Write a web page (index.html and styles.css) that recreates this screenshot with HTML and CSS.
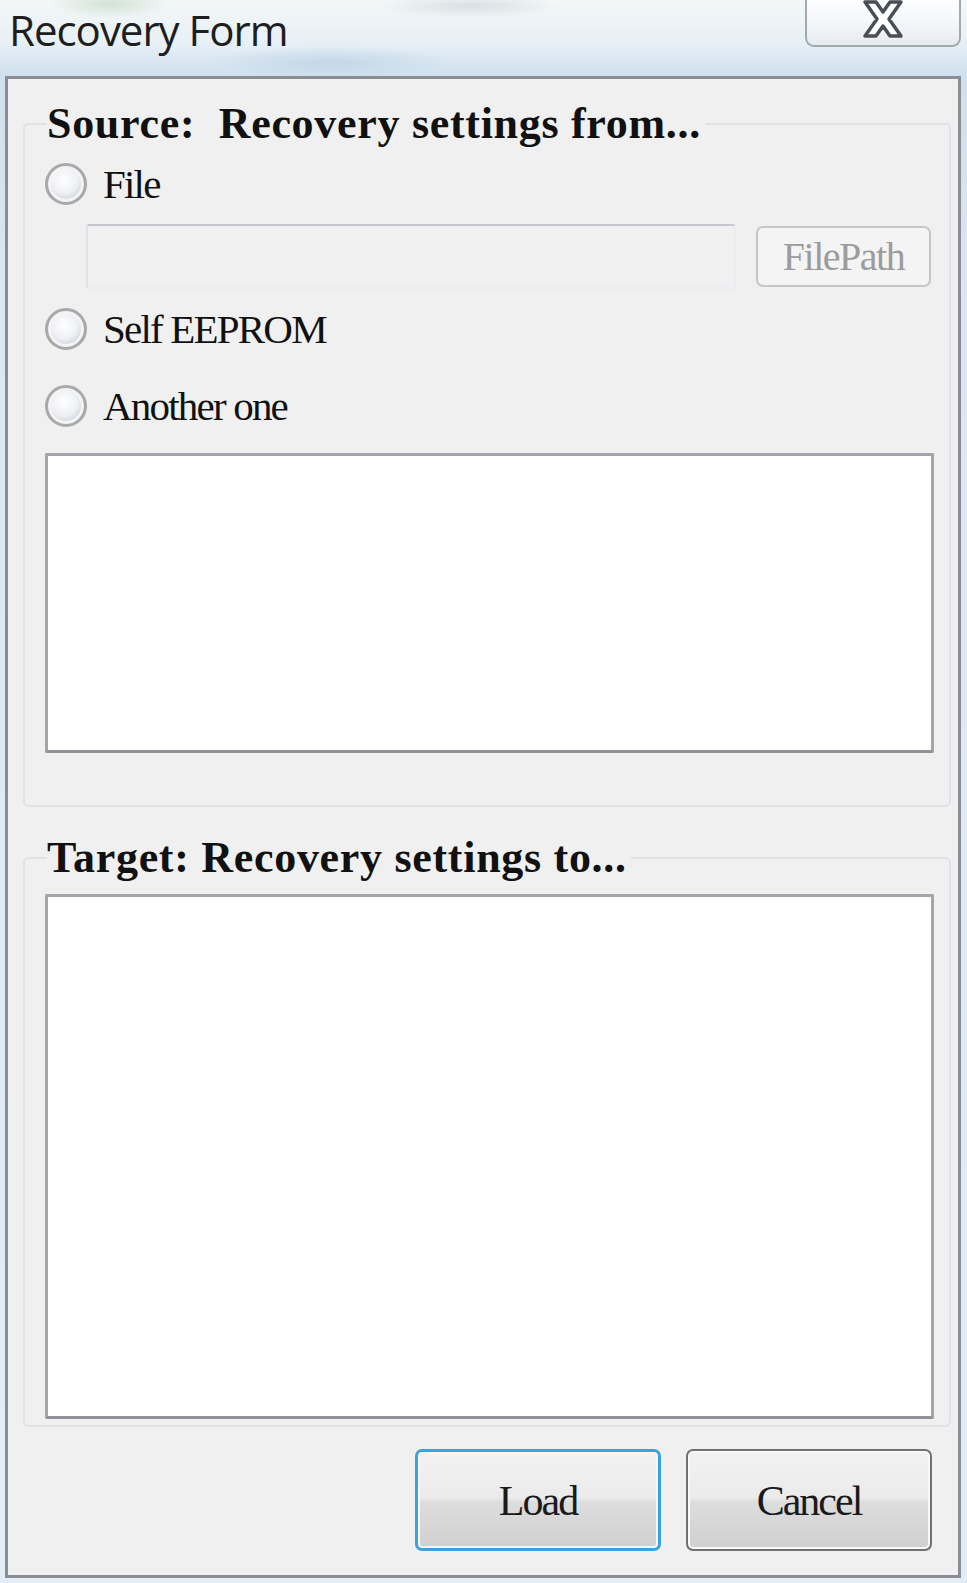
FILE: index.html
```html
<!DOCTYPE html>
<html lang="en">
<head>
  <meta charset="UTF-8">
  <meta name="viewport" content="width=device-width, initial-scale=1.0">
  <title>Recovery Form</title>
  <link rel="stylesheet" href="styles.css">
</head>
<body>
  <div class="titlebar">
    <div class="title">Recovery Form</div>
    <div class="close-btn">
      <svg width="48" height="40" viewBox="0 0 48 40">
        <path d="M6 3 L17 3 L24 13 L31 3 L42 3 L30 20 L42 37 L31 37 L24 27 L17 37 L6 37 L18 20 Z"
              fill="#fff" stroke="#4a4f57" stroke-width="3.5" stroke-linejoin="round"/>
      </svg>
    </div>
  </div>

  <div id="window">
    <fieldset class="group" id="source">
      <legend>Source:&nbsp; Recovery settings from...</legend>

      <label class="radio-row" id="rowFile">
        <span class="radio"></span>
        <span class="label">File</span>
      </label>
      <div class="file-row">
        <div class="textbox"></div>
        <div class="btn-disabled">FilePath</div>
      </div>

      <label class="radio-row" id="rowSelf">
        <span class="radio"></span>
        <span class="label">Self EEPROM</span>
      </label>
      <label class="radio-row" id="rowAnother">
        <span class="radio"></span>
        <span class="label">Another one</span>
      </label>

      <div class="listbox" id="sourceList"></div>
    </fieldset>

    <fieldset class="group" id="target">
      <legend>Target: Recovery settings to...</legend>
      <div class="listbox" id="targetList"></div>
    </fieldset>

    <div class="buttons">
      <div class="button default">Load</div>
      <div class="button">Cancel</div>
    </div>
  </div>
</body>
</html>
```

FILE: styles.css
```css
body {
  margin: 0;
  height: 1583px;
  overflow: hidden;
  background:
    radial-gradient(ellipse 60px 14px at 110px 4px, rgba(150, 190, 150, 0.35), transparent),
    radial-gradient(ellipse 90px 12px at 470px 6px, rgba(160, 170, 185, 0.3), transparent),
    radial-gradient(ellipse 120px 16px at 330px 62px, rgba(170, 195, 220, 0.45), transparent),
    linear-gradient(180deg, #f3f7f6 0%, #e9f1f7 40px, #cfe0ee 76px, #dbe8f3 300px, #e3edf6 100%);
  font-family: "Liberation Serif", "Times New Roman", serif;
  color: #111;
}

.titlebar {
  height: 76px;
  display: flex;
  justify-content: space-between;
  align-items: flex-start;
}

.title {
  font-family: "Open Sans", "Noto Sans", sans-serif;
  font-size: 42px;
  letter-spacing: -1px;
  color: #1e1e1e;
  margin: 2px 0 0 9px;
  line-height: 56px;
}

.close-btn {
  width: 152px;
  height: 46px;
  margin-right: 6px;
  margin-top: -1px;
  border: 2px solid #a3a9b1;
  border-top: none;
  border-radius: 0 0 9px 9px;
  background: linear-gradient(180deg, #ffffff 0%, #f2f5f8 60%, #e6ebf0 100%);
  display: flex;
  justify-content: center;
  align-items: flex-start;
}

#window {
  margin: 0 6px 0 5px;
  height: 1496px;
  border: 3px solid #8a8e94;
  background: #f0f0f0;
  padding: 0 7px 0 15px;
}

.group {
  border: 2px solid #dfe3e8;
  border-radius: 5px;
  margin: 0;
  padding: 0 0 0 20px;
  min-width: 0;
}

#source {
  margin-top: 23px;
  padding-bottom: 52px;
}

#target {
  margin-top: 29px;
  padding-bottom: 6px;
}

legend {
  padding: 0 4px 0 0;
  margin-left: 2px;
  font-size: 44px;
  line-height: 44px;
  font-weight: bold;
  letter-spacing: 0.7px;
  color: #111;
}

.radio-row {
  display: flex;
  align-items: center;
  gap: 16px;
  height: 44px;
}

#rowFile {
  margin-top: 16px;
}

#rowSelf {
  margin-top: 18px;
}

#rowAnother {
  margin-top: 33px;
}

.radio {
  width: 36px;
  height: 36px;
  border: 3px solid #a9a9a9;
  border-radius: 50%;
  background: radial-gradient(circle at 45% 40%, #ffffff 0%, #eef0f4 45%, #c9ced6 75%, #e4e4e4 100%);
  box-shadow: inset 0 0 0 3px #f4f4f4;
  flex: none;
}

.label {
  font-size: 41px;
  line-height: 44px;
  letter-spacing: -1.8px;
}

.file-row {
  display: flex;
  align-items: center;
  margin-top: 18px;
  margin-left: 41px;
  gap: 20px;
}

.textbox {
  width: 646px;
  height: 61px;
  border: 2px solid #e8edf3;
  border-top-color: #c4c8ce;
  border-left-color: #dde2e8;
  border-radius: 3px;
  background: #f0f0f0;
}

.btn-disabled {
  width: 171px;
  height: 57px;
  border: 2px solid #c3c6ca;
  border-radius: 7px;
  background: #f4f4f4;
  color: #9c9c9c;
  font-size: 40px;
  line-height: 57px;
  text-align: center;
  letter-spacing: -1.5px;
}

.listbox {
  width: 883px;
  border: 3px solid #a2a6ab;
  border-bottom-color: #8f9398;
  border-radius: 2px;
  background: #fff;
}

#sourceList {
  margin-top: 25px;
  height: 294px;
}

#targetList {
  margin-top: 14px;
  height: 519px;
}

.buttons {
  display: flex;
  justify-content: flex-end;
  gap: 25px;
  margin-top: 22px;
  padding-right: 19px;
}

.button {
  width: 242px;
  height: 98px;
  border: 2px solid #707070;
  border-radius: 7px;
  background: linear-gradient(180deg, #f2f2f2 0%, #ebebeb 48%, #dddddd 52%, #d0d0d0 100%);
  box-shadow: inset 0 0 0 2px #f8f8f8;
  font-size: 42px;
  line-height: 100px;
  text-align: center;
  letter-spacing: -2px;
  color: #1a1a1a;
}

.button.default {
  border: 3px solid #3aa2dc;
  width: 240px;
  height: 96px;
  line-height: 98px;
}
```
